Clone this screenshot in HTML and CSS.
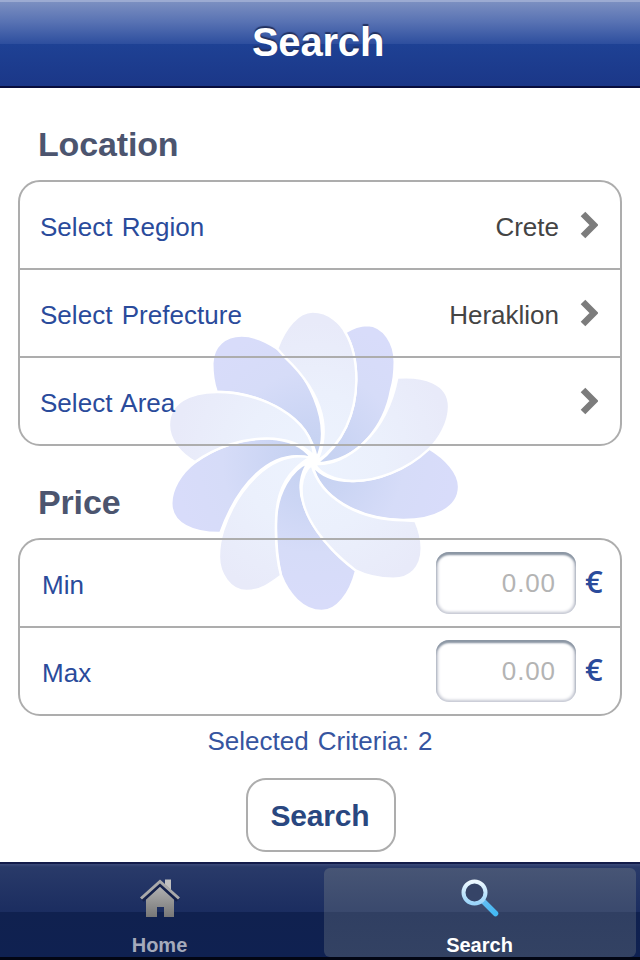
FILE: index.html
```html
<!DOCTYPE html>
<html lang="en">
<head>
<meta charset="utf-8">
<title>Search</title>
<link rel="stylesheet" href="styles.css">
</head>
<body>
<div class="app">
  <header class="navbar"><h1>Search</h1></header>
  <main class="content">
    <svg class="flower" viewBox="0 0 930 960" aria-hidden="true">
      <defs>
        <radialGradient id="dark" gradientUnits="userSpaceOnUse" cx="460" cy="485" r="420"><stop offset="0" stop-color="#c4d1f0"/><stop offset=".3" stop-color="#cbd5f4"/><stop offset=".65" stop-color="#d6dcf8"/><stop offset="1" stop-color="#d8dcfa"/></radialGradient>
        <radialGradient id="light" gradientUnits="userSpaceOnUse" cx="460" cy="485" r="420"><stop offset="0" stop-color="#edf3fe"/><stop offset=".5" stop-color="#ebf0fc"/><stop offset="1" stop-color="#e8eaf9"/></radialGradient>
      </defs>
      <g stroke="#fff" stroke-width="7" stroke-linejoin="round">
        <g fill="url(#dark)">
          <path d="M556 97C590 75 610 75 622 75C672 77 704 130 704 185C704 210 702 240 693 270C675 370 600 485 470 490C550 430 588 340 589 240C589 190 578 135 556 97Z"/>
          <path d="M806 445C860 477 897 520 897 560C897 625 820 660 730 660C590 657 480 590 457 495C480 525 520 543 575 543C650 545 740 510 806 445Z"/>
          <path d="M588 812C570 883 530 933 485 933C430 933 385 883 363 825C350 770 347 700 349 650C354 580 390 510 445 487C420 520 415 570 430 610C450 680 520 765 588 812Z"/>
          <path d="M181 699C100 700 34 672 34 610C34 570 60 520 106 486C170 440 250 415 330 416C390 420 430 440 455 475C330 440 230 560 181 699Z"/>
          <path d="M170 275C157 240 157 215 157 190C159 138 195 107 245 107C290 107 325 128 352 146C440 210 520 370 470 475C450 350 300 275 170 275Z"/>
        </g>
        <g fill="url(#light)">
          <path d="M352 146C375 82 415 35 458 35C510 35 545 75 556 98C578 135 589 190 589 240C588 340 550 430 470 485C510 400 500 290 375 172Z"/>
          <path d="M712 233C790 227 867 248 867 320C867 370 835 420 806 448C740 510 650 545 575 543C520 540 480 520 465 492C560 500 680 400 712 233Z"/>
          <path d="M766 663C782 700 785 725 785 745C785 803 750 836 700 836C660 836 620 828 588 812C500 745 420 650 425 560C427 530 440 505 455 495C480 590 590 660 730 661Z"/>
          <path d="M363 827C330 852 300 873 260 873C210 873 177 820 177 770C177 740 182 715 190 690C230 570 330 450 450 472C390 510 350 560 348 660C346 720 350 780 363 827Z"/>
          <path d="M105 486C60 460 27 420 27 375C27 308 90 276 170 276C300 275 455 350 462 468C420 425 370 415 320 415C250 415 170 440 105 486Z"/>
        </g>
      </g>
      <circle cx="460" cy="484" r="9" fill="#fff"/>
    </svg>
    <h2>Location</h2>
    <section class="card">
      <div class="row"><span class="label">Select Region</span><span class="value">Crete</span><svg class="chevron" viewBox="0 0 18 28"><path d="M3 3L14 14L3 25"/></svg></div>
      <div class="row"><span class="label">Select Prefecture</span><span class="value">Heraklion</span><svg class="chevron" viewBox="0 0 18 28"><path d="M3 3L14 14L3 25"/></svg></div>
      <div class="row"><span class="label">Select Area</span><span class="value"></span><svg class="chevron" viewBox="0 0 18 28"><path d="M3 3L14 14L3 25"/></svg></div>
    </section>
    <h2>Price</h2>
    <section class="card price">
      <div class="row"><span class="label">Min</span><span class="field">0.00</span><span class="euro">€</span></div>
      <div class="row"><span class="label">Max</span><span class="field">0.00</span><span class="euro">€</span></div>
    </section>
    <p class="criteria">Selected Criteria: 2</p>
    <button class="submit" type="button">Search</button>
  </main>
  <nav class="tabs">
    <div class="tab">
      <svg class="icon" viewBox="0 0 44 44">
        <defs><linearGradient id="metal" x2="0" y2="1"><stop offset="0" stop-color="#b2b2b2"/><stop offset="1" stop-color="#777"/></linearGradient></defs>
        <path fill="#c0c0c0" d="M27 2.500h6v12l-6-6z"/>
        <path fill="url(#metal)" d="M8 22L22 9L36 22V40H26V30H19V40H8Z"/>
        <path fill="none" stroke="#14214b" stroke-width="5" d="M4 23L22 6.500L40 23"/>
        <path fill="none" stroke="#aaa" stroke-width="3" d="M3 21.500L22 4.500L41 21.500"/>
      </svg>
      <span>Home</span>
    </div>
    <div class="tab active">
      <svg class="icon" viewBox="0 0 44 44">
        <defs><linearGradient id="ring" x2="0" y2="1"><stop offset="0" stop-color="#edf8ff"/><stop offset="1" stop-color="#9bd5fa"/></linearGradient><linearGradient id="handle" x2="1" y2="1"><stop offset="0" stop-color="#65bdf2"/><stop offset="1" stop-color="#43b9f4"/></linearGradient></defs>
        <path stroke="url(#handle)" stroke-width="5.500" stroke-linecap="round" d="M25 24L37.500 36.500"/>
        <circle cx="16.500" cy="15.500" r="11" fill="#364467" stroke="url(#ring)" stroke-width="4"/>
      </svg>
      <span>Search</span>
    </div>
  </nav>
</div>
</body>
</html>
```
FILE: styles.css
```css
* { box-sizing: border-box; }
body { margin: 0; font-family: "Liberation Sans", Arial, sans-serif; background: #fff; }
.app { width: 640px; height: 960px; display: flex; flex-direction: column; overflow: hidden; }
h1, h2, p { margin: 0; }
.navbar {
  height: 88px; flex: none; padding: 18px 4px 0 0; text-align: center;
  border-top: 2px solid #9cabd2; border-bottom: 2px solid #080d3c;
  background: linear-gradient(#7b8fc1 0, #5872b3 20px, #2d4e9e 42px, #1e4194 42px, #1b3788 84px);
}
h1 { font-size: 40px; line-height: 44px; letter-spacing: -.2px; color: #fff; text-shadow: 0 -2px 1px #233260; }
.content { position: relative; flex: 1; padding: 0 18px; display: flex; flex-direction: column; }
.flower { position: absolute; left: 160px; top: 212px; width: 310px; height: 320px; }
.content > :not(.flower) { position: relative; }
h2 { height: 92px; padding: 36px 0 0 20px; font-size: 34px; line-height: 40px; letter-spacing: -.15px; color: #4c556f; }
.card { border: 2px solid #adadad; border-radius: 22px; }
.row { height: 88px; display: flex; align-items: center; padding: 4px 22px 0 20px; font-size: 26px; }
.row + .row { border-top: 2px solid #adadad; }
.row:first-child { height: 86px; }
.label { color: #2a4b9b; letter-spacing: .03px; word-spacing: 2px; }
.value { margin-left: auto; color: #444; }
.chevron { width: 18px; height: 28px; margin: -4px 0 0 21px; fill: none; stroke: #7c7c7c; stroke-width: 6.5; }
.price .row { padding: 0 16px 0 22px; }
.price .label { padding-top: 4px; }
.field {
  width: 140px; height: 62px; margin-left: auto; padding: 0 20px 0 0; text-align: right; line-height: 62px;
  border-radius: 13px; color: #b4b4b4; letter-spacing: .9px;
  box-shadow: inset 0 3px 2px #8b96a3, inset 0 0 3px 2px #c4c7d2;
}
.euro { width: 20px; margin-left: 8px; font-family: "Open Sans", "Noto Sans", sans-serif; font-weight: 600; font-size: 31px; line-height: 40px; margin-top: -5px; text-indent: 1px; color: #2a4b9b; }
.criteria { height: 62px; padding-top: 10px; text-align: center; font-size: 26px; line-height: 30px; word-spacing: 2px; color: #3655a0; }
.submit { width: 150px; height: 74px; align-self: center; left: 1px; padding: 2px 2px 0 0; border: 2px solid #adadad; border-radius: 20px; background: #fff; color: #294780; font: bold 30px "Liberation Sans", Arial, sans-serif; letter-spacing: -.2px; }
.tabs {
  height: 98px; flex: none; display: flex; border-top: 2px solid #131c4a; border-bottom: 3px solid #020614;
  background: linear-gradient(#3b4a79 0, #293a69 3px, #1b2d60 48px, #10214f 48px, #0f2151 100%);
}
.tab { width: 320px; height: 93px; display: flex; flex-direction: column; align-items: center; padding: 13px 1px 0 0; font-weight: bold; font-size: 20px; line-height: 24px; color: #a5aabb; }
.tab.active { width: 312px; height: 89px; margin: 4px 4px 0; padding-top: 9px; border-radius: 6px; background: linear-gradient(#475575, #3a496d 44px, #303f62 44px, #334263); color: #fff; }
.icon { width: 44px; height: 44px; margin-bottom: 12px; }
```
